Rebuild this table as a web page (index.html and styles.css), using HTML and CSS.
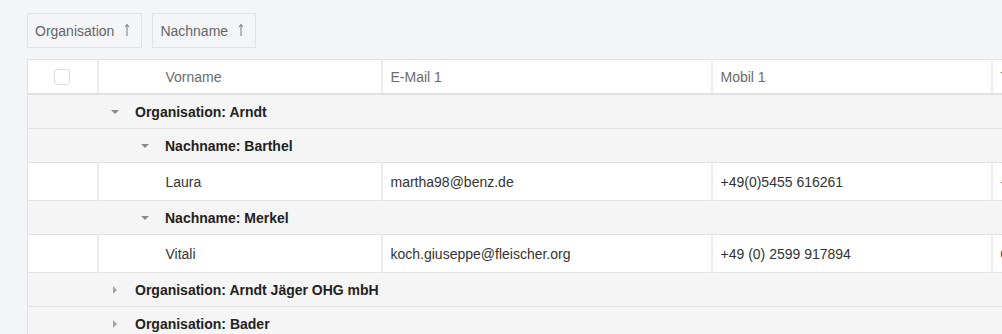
FILE: index.html
```html
<!DOCTYPE html>
<html lang="de">
<head>
<meta charset="utf-8">
<title>Kontakte</title>
<link rel="stylesheet" href="styles.css">
</head>
<body>
<div class="page">
  <div class="group-bar">
    <div class="chip">Organisation <svg class="sort" viewBox="0 0 8 14" width="8" height="14"><path d="M4 13V1.5M2 4L4 1.5L6 4" fill="none" stroke="#777" stroke-width="1"/></svg></div>
    <div class="chip">Nachname <svg class="sort" viewBox="0 0 8 14" width="8" height="14"><path d="M4 13V1.5M2 4L4 1.5L6 4" fill="none" stroke="#777" stroke-width="1"/></svg></div>
  </div>
  <div class="grid-wrap">
    <table class="grid">
      <colgroup>
        <col class="c-check"><col class="c-first"><col class="c-mail"><col class="c-mobile"><col class="c-phone">
      </colgroup>
      <thead>
        <tr>
          <th class="check"><span class="box"></span></th>
          <th class="first">Vorname</th>
          <th>E-Mail 1</th>
          <th>Mobil 1</th>
          <th>Telefon 1</th>
        </tr>
      </thead>
      <tbody>
        <tr class="grp lvl1"><td colspan="5"><span class="caret down"></span>Organisation: Arndt</td></tr>
        <tr class="grp lvl2"><td colspan="5"><span class="caret down"></span>Nachname: Barthel</td></tr>
        <tr class="row"><td class="check"></td><td class="first">Laura</td><td>martha98@benz.de</td><td>+49(0)5455 616261</td><td>+49 (0) 1234 567890</td></tr>
        <tr class="grp lvl2"><td colspan="5"><span class="caret down"></span>Nachname: Merkel</td></tr>
        <tr class="row"><td class="check"></td><td class="first">Vitali</td><td>koch.giuseppe@fleischer.org</td><td>+49 (0) 2599 917894</td><td>0171 2345678</td></tr>
        <tr class="grp lvl1"><td colspan="5"><span class="caret right"></span>Organisation: Arndt Jäger OHG mbH</td></tr>
        <tr class="grp lvl1"><td colspan="5"><span class="caret right"></span>Organisation: Bader</td></tr>
      </tbody>
    </table>
  </div>
</div>
</body>
</html>
```

FILE: styles.css
```css
html, body {
  margin: 0;
  height: 100%;
  overflow: hidden;
}
body {
  background: #f4f5f8;
  font-family: "Liberation Sans", Arial, sans-serif;
  font-size: 14px;
  color: #333;
}
.page {
  padding: 13px 0 0 27px;
}
.group-bar {
  display: flex;
  gap: 10px;
  margin-bottom: 11px;
}
.chip {
  display: flex;
  align-items: center;
  gap: 9px;
  height: 35px;
  padding: 0 10px 0 7px;
  border: 1px solid #e1e2e5;
  color: #666;
  box-sizing: border-box;
}
.sort {
  display: block;
  margin-top: -2px;
}
.grid-wrap {
  width: 1200px;
}
.grid {
  table-layout: fixed;
  border-collapse: collapse;
  width: 1166px;
  background: #fff;
  border-left: 1px solid #e0e0e0;
  border-top: 1px solid #e0e0e0;
}
.c-check { width: 70px; }
.c-first { width: 284px; }
.c-mail { width: 330px; }
.c-mobile { width: 280px; }
.c-phone { width: 202px; }
th, td {
  padding: 0 8px;
  text-align: left;
  white-space: nowrap;
  overflow: hidden;
}
th {
  height: 33px;
  font-weight: normal;
  color: #6b6b6b;
  border-right: 2px solid #ececec;
  border-bottom: 2px solid #e0e0e0;
}
.check {
  text-align: center;
  padding: 0;
}
.box {
  display: inline-block;
  width: 14px;
  height: 14px;
  border: 1px solid #dcdcdc;
  border-radius: 3px;
  vertical-align: middle;
  background: #fff;
}
th.first, td.first {
  padding-left: 67px;
}
.row td {
  height: 37px;
  border-right: 2px solid #ececec;
  border-bottom: 1px solid #e2e2e2;
  color: #333;
}
.grp td {
  height: 33px;
  background: #f5f5f5;
  border-bottom: 1px solid #e2e2e2;
  font-weight: bold;
  color: #222;
}
.lvl1 td { padding-left: 83px; }
.lvl2 td { padding-left: 113px; }
.caret {
  display: inline-block;
  width: 0;
  height: 0;
  vertical-align: middle;
  margin-right: 16px;
}
.caret.down {
  border-left: 4px solid transparent;
  border-right: 4px solid transparent;
  border-top: 4px solid #8a8a8a;
  margin-top: -2px;
}
.caret.right {
  border-top: 4px solid transparent;
  border-bottom: 4px solid transparent;
  border-left: 4px solid #a5a5a5;
  margin-left: 2px;
  margin-right: 18px;
  margin-top: -2px;
}
```
